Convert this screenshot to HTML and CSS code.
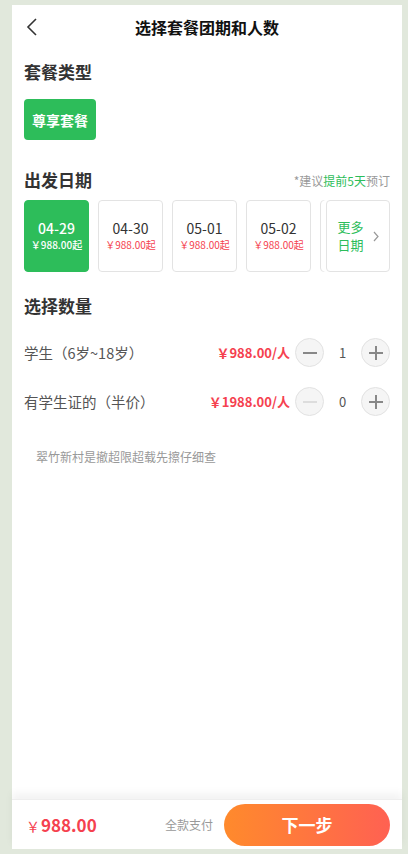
FILE: index.html
```html
<!DOCTYPE html>
<html lang="zh-CN">
<head>
    <meta charset="UTF-8">
    <meta name="viewport" content="width=device-width, initial-scale=1.0">
    <title>选择套餐团期和人数</title>
    <link rel="stylesheet" href="styles.css">
</head>
<body>

    <div class="page">
        <!-- Cabecera -->
        <div class="header">
            <svg class="back" width="12" height="18" viewBox="0 0 12 18">
                <polyline points="10,1 2,9 10,17" fill="none" stroke="#333" stroke-width="1.6"/>
            </svg>
            <h1>选择套餐团期和人数</h1>
        </div>

        <div class="content">
            <!-- Tipo de paquete -->
            <h2 class="sectionTitle">套餐类型</h2>
            <div class="packages">
                <button class="package active">尊享套餐</button>
            </div>

            <!-- Fecha de salida -->
            <div class="sectionHead">
                <h2 class="sectionTitle">出发日期</h2>
                <span class="tip">*建议<em>提前5天</em>预订</span>
            </div>
            <div class="dates">
                <div class="dateList">
                    <div class="dateCard active">
                        <span class="day">04-29</span>
                        <span class="price">￥988.00起</span>
                    </div>
                    <div class="dateCard">
                        <span class="day">04-30</span>
                        <span class="price">￥988.00起</span>
                    </div>
                    <div class="dateCard">
                        <span class="day">05-01</span>
                        <span class="price">￥988.00起</span>
                    </div>
                    <div class="dateCard">
                        <span class="day">05-02</span>
                        <span class="price">￥988.00起</span>
                    </div>
                    <!-- tarjeta tapada por "更多日期" -->
                    <div class="dateCard"></div>
                </div>
                <div class="moreDates">
                    <span>更多<br>日期</span>
                    <svg width="6" height="11" viewBox="0 0 6 11">
                        <polyline points="1,1 5,5.5 1,10" fill="none" stroke="#999" stroke-width="1.2"/>
                    </svg>
                </div>
            </div>

            <!-- Cantidad -->
            <h2 class="sectionTitle qtyTitle">选择数量</h2>
            <div class="qtyList">
                <div class="qtyRow">
                    <span class="qtyLabel">学生（6岁~18岁）</span>
                    <span class="qtyPrice">￥988.00/人</span>
                    <div class="stepper">
                        <span class="stepBtn minus"></span>
                        <span class="count">1</span>
                        <span class="stepBtn plus"></span>
                    </div>
                </div>
                <div class="qtyRow">
                    <span class="qtyLabel">有学生证的（半价）</span>
                    <span class="qtyPrice">￥1988.00/人</span>
                    <div class="stepper">
                        <span class="stepBtn minus disabled"></span>
                        <span class="count">0</span>
                        <span class="stepBtn plus"></span>
                    </div>
                </div>
            </div>

            <p class="note">翠竹新村是撤超限超载先擦仔细查</p>
        </div>

        <!-- Pie -->
        <div class="footer">
            <span class="total"><small>￥</small>988.00</span>
            <span class="payType">全款支付</span>
            <button class="nextBtn">下一步</button>
        </div>
    </div>

</body>
</html>
```

FILE: styles.css
```css
/* Reset */
* {
    margin: 0;
    padding: 0;
    box-sizing: border-box;
}

body {
    font-family: "Noto Sans CJK SC", sans-serif;
    background-color: #e1e8dc;
    color: #333;
}

.page {
    width: 390px;
    height: 844px;
    margin: 5px 0 0 12px;
    background-color: #fff;
    display: flex;
    flex-direction: column;
}

/* Cabecera */
.header {
    height: 44px;
    display: flex;
    align-items: center;
    justify-content: center;
    position: relative;
}

.back {
    position: absolute;
    left: 14px;
    top: 13px;
}

.header h1 {
    font-size: 16px;
    line-height: 22px;
    font-weight: bold;
    color: #111;
}

.content {
    flex: 1;
    padding: 11px 12px 0;
}

.sectionTitle {
    font-size: 17px;
    line-height: 24px;
    font-weight: bold;
    color: #333;
}

.packages {
    display: flex;
    margin-top: 15px;
}

.package {
    font-family: inherit;
    height: 41px;
    padding: 0 8px;
    border: none;
    border-radius: 4px;
    font-size: 14px;
    font-weight: bold;
    color: #fff;
    background-color: #2dbd5a;
}

.sectionHead {
    display: flex;
    justify-content: space-between;
    align-items: center;
    margin-top: 28px;
}

.tip {
    font-size: 12px;
    color: #999;
}

.tip em {
    font-style: normal;
    color: #2dbd5a;
}

/* Fechas */
.dates {
    position: relative;
    margin-top: 8px;
    height: 72px;
}

.dateList {
    display: flex;
    gap: 9px;
    overflow: hidden;
    height: 72px;
}

.dateCard {
    flex: 0 0 65px;
    height: 72px;
    border: 1px solid #e3e3e3;
    border-radius: 4px;
    display: flex;
    flex-direction: column;
    align-items: center;
    justify-content: center;
}

.dateCard .day {
    font-size: 14px;
    line-height: 18px;
    color: #333;
}

.dateCard .price {
    font-size: 10px;
    line-height: 16px;
    color: #f5414f;
}

.dateCard.active {
    background-color: #2dbd5a;
    border-color: #2dbd5a;
}

.dateCard.active .day {
    color: #fff;
    font-weight: 500;
}

.dateCard.active .price {
    color: #fff;
    font-weight: 500;
}

.moreDates {
    position: absolute;
    right: 0;
    top: 0;
    width: 64px;
    height: 72px;
    background-color: #fff;
    border: 1px solid #e3e3e3;
    border-radius: 4px;
    box-shadow: -4px 0 0 #fff;
    display: flex;
    align-items: center;
    justify-content: center;
    gap: 9px;
    font-size: 13px;
    line-height: 18px;
    color: #2dbd5a;
}

/* Cantidad */
.qtyTitle {
    margin-top: 22px;
}

.qtyList {
    margin-top: 10px;
}

.qtyRow {
    display: flex;
    align-items: center;
    height: 49px;
}

.qtyLabel {
    flex: 1;
    font-size: 14.5px;
    color: #555;
}

.qtyPrice {
    font-size: 13px;
    font-weight: bold;
    color: #f5414f;
    margin-right: 5px;
}

.stepper {
    display: flex;
    align-items: center;
}

.count {
    width: 37px;
    text-align: center;
    font-size: 13px;
    color: #555;
}

.stepBtn {
    width: 29px;
    height: 29px;
    border-radius: 50%;
    border: 1px solid #e2e2e2;
    background-color: #f5f5f5;
    position: relative;
}

.stepBtn::before,
.plus::after {
    content: "";
    position: absolute;
    left: 7px;
    top: 13px;
    width: 14px;
    height: 2px;
    background-color: #888;
}

.plus::after {
    left: 13px;
    top: 7px;
    width: 2px;
    height: 14px;
}

.minus.disabled::before {
    background-color: #ddd;
}

.note {
    margin-top: 22px;
    padding-left: 12px;
    font-size: 12px;
    line-height: 18px;
    color: #999;
}

/* Pie */
.footer {
    height: 50px;
    display: flex;
    align-items: center;
    padding: 0 12px 0 14px;
    box-shadow: 0 -6px 8px rgba(0, 0, 0, 0.05);
    border-top: 1px solid #eee;
}

.total {
    font-size: 17px;
    font-weight: bold;
    color: #f5414f;
}

.total small {
    font-size: 14px;
    font-weight: normal;
    margin-right: 1px;
}

.payType {
    margin-left: auto;
    margin-right: 11px;
    font-size: 12px;
    color: #999;
}

.nextBtn {
    font-family: inherit;
    width: 166px;
    height: 42px;
    border: none;
    border-radius: 21px;
    background: linear-gradient(90deg, #ff8a2c, #ff6152);
    color: #fff;
    font-size: 17px;
    font-weight: bold;
}
```
